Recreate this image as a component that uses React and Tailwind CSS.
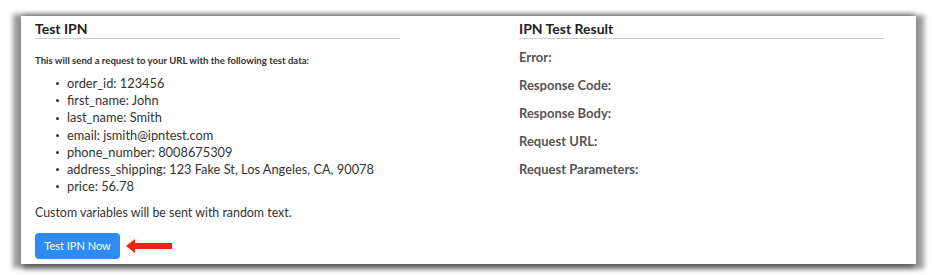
const items = [
  'order_id: 123456',
  'first_name: John',
  'last_name: Smith',
  'email: jsmith@ipntest.com',
  'phone_number: 8008675309',
  'address_shipping: 123 Fake St, Los Angeles, CA, 90078',
  'price: 56.78',
];

const results = ['Error:', 'Response Code:', 'Response Body:', 'Request URL:', 'Request Parameters:'];

export default function App() {
  return (
    <div className="w-[932px] h-[275px] bg-white pt-[16px] pl-[21px] font-['Lato',sans-serif] text-[#333]">
      <div className="w-[895px] h-[248px] bg-white shadow-[-5px_1px_5px_3px_rgba(0,0,0,0.4),5px_2px_5px_3px_rgba(0,0,0,0.4)] flex pl-[14px] gap-[119px]">
        {/* left column */}
        <div className="w-[365px] pt-[4px]">
          <h2 className="text-[14px] font-bold text-[#222] leading-[17px] pb-[1px] border-b border-[#cfcfcf]">Test IPN</h2>
          <p className="text-[9.6px] font-bold text-[#333] mt-[16px] leading-[11px]">
            This will send a request to your URL with the following test data:
          </p>
          <ul className="mt-[9px] pl-[32px] text-[12.8px] leading-[17.2px]">
            {items.map((it) => (
              <li key={it} className="flex items-center">
                <span className="w-[3px] h-[3px] rounded-full bg-[#333] mr-[8px] -ml-[11px]"></span>
                {it}
              </li>
            ))}
          </ul>
          <p className="text-[12.4px] mt-[9px] leading-[17px]">Custom variables will be sent with random text.</p>
          <div className="flex items-center mt-[12px]">
            <button className="w-[85px] h-[26px] bg-[#2d8cf4] text-white text-[11px] rounded-[4px]">Test IPN Now</button>
            <svg width="48" height="14" viewBox="0 0 48 14" className="ml-[6px]">
              <polygon points="0,7 9,0 9,4 46,4 46,10 9,10 9,14" fill="#ee2211" />
            </svg>
          </div>
        </div>
        {/* right column */}
        <div className="w-[365px] pt-[4px]">
          <h2 className="text-[14px] font-bold text-[#222] leading-[17px] pb-[1px] border-b border-[#cfcfcf]">IPN Test Result</h2>
          <div className="mt-[10px] flex flex-col gap-[12px]">
            {results.map((r) => (
              <div key={r} className="text-[13px] font-bold text-[#555] leading-[16px]">{r}</div>
            ))}
          </div>
        </div>
      </div>
    </div>
  );
}
